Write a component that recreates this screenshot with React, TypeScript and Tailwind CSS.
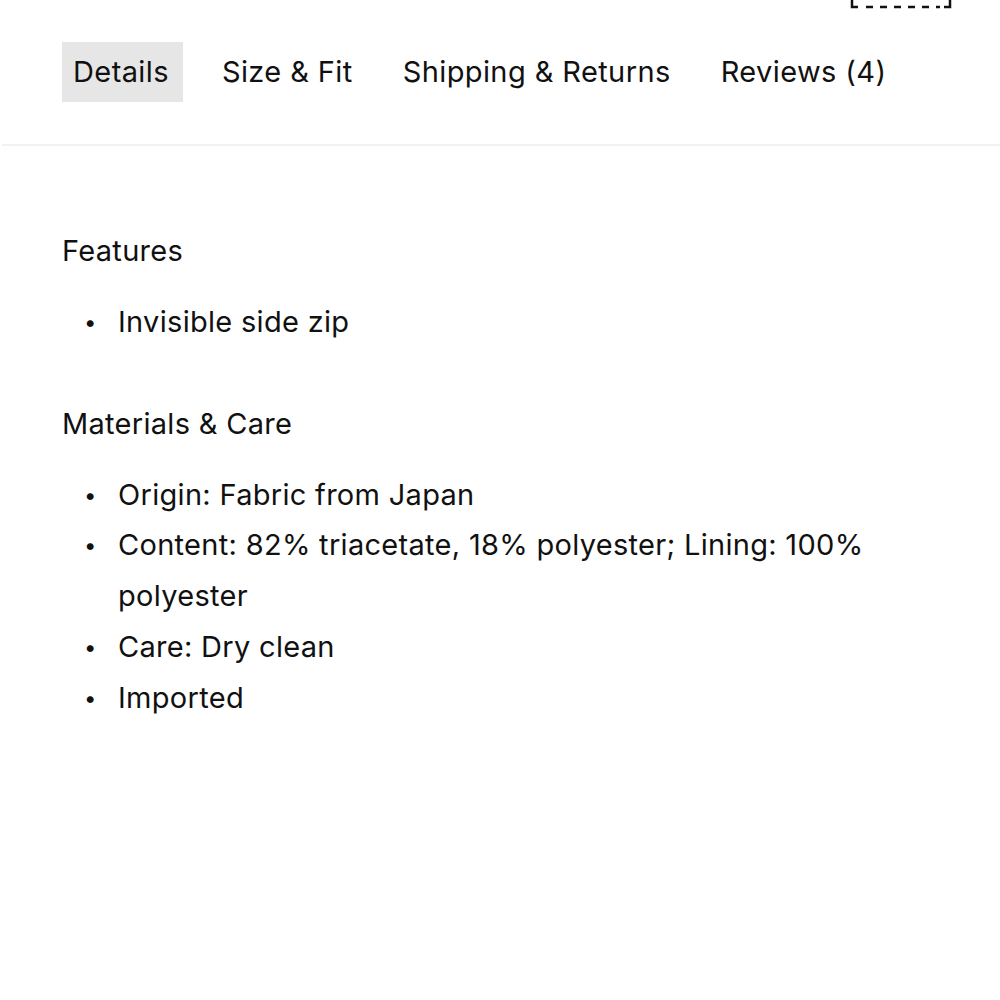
import React from "react";

const tabs = ["Details", "Size & Fit", "Shipping & Returns", "Reviews (4)"];

function Bullets({ items }: { items: string[] }) {
  return (
    <ul className="mt-[21px] pl-[56px] pr-[100px]">
      {items.map((t) => (
        <li key={t} className="relative leading-[50.7px]">
          <span className="absolute left-[-34px] top-0 text-[22px]">•</span>
          {t}
        </li>
      ))}
    </ul>
  );
}

export default function App() {
  return (
    <div
      className="relative h-[1000px] w-[1000px] overflow-hidden bg-white text-[#111]"
      style={{ fontFamily: "Inter, 'Noto Sans', sans-serif" }}
    >
      <svg className="absolute left-[850px] top-0" width="102" height="10" viewBox="0 0 102 10">
        <path d="M2 0 V7 H8" stroke="#111" strokeWidth="2.5" fill="none" />
        <path d="M100 0 V7 H94" stroke="#111" strokeWidth="2.5" fill="none" />
        <path d="M16 7 H90" stroke="#111" strokeWidth="2.5" strokeDasharray="7 7" fill="none" />
      </svg>
      <div className="flex gap-[28px] pl-[62px] pt-[42px]">
        {tabs.map((t, i) => (
          <div
            key={t}
            className={`flex h-[60px] items-center px-[11px] text-[29px] tracking-[0.4px] ${i === 0 ? "bg-[#e6e6e6] pr-[14px]" : ""}`}
          >
            {t}
          </div>
        ))}
      </div>
      <div className="ml-[2px] mt-[42px] h-[2px] bg-[#f1f1f1]" />
      <div className="pl-[62px] pt-[80px] text-[29px] tracking-[0.3px]">
        <div className="leading-[50px]">Features</div>
        <Bullets items={["Invisible side zip"]} />
        <div className="mt-[51px] leading-[50px]">Materials &amp; Care</div>
        <Bullets
          items={[
            "Origin: Fabric from Japan",
            "Content: 82% triacetate, 18% polyester; Lining: 100% polyester",
            "Care: Dry clean",
            "Imported",
          ]}
        />
      </div>
    </div>
  );
}
